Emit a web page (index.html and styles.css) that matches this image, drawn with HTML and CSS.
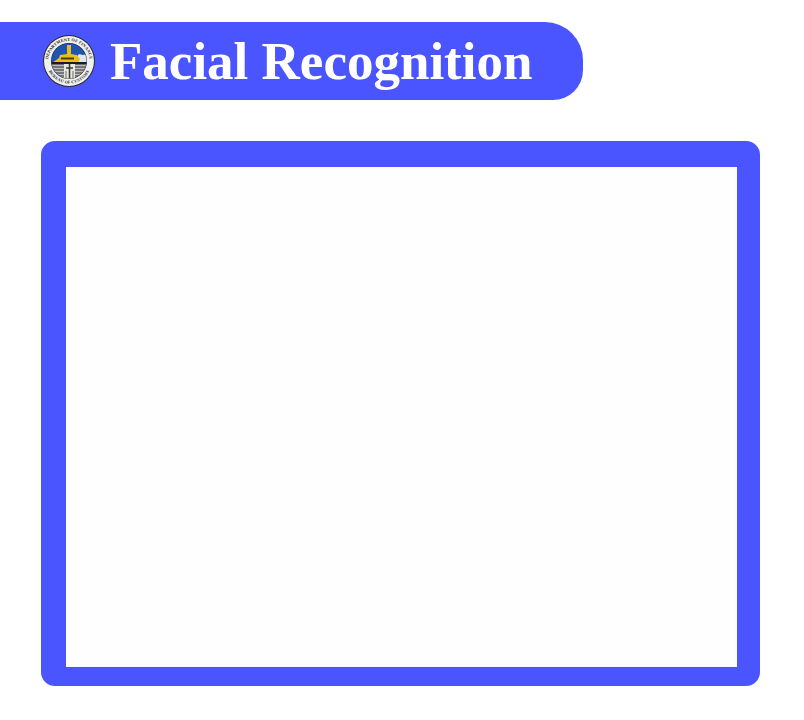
FILE: index.html
```html
<!DOCTYPE html>
<html lang="en">
<head>
<meta charset="utf-8">
<title>Facial Recognition</title>
<link rel="stylesheet" href="styles.css">
</head>
<body>
<header class="banner">
  <svg class="seal" viewBox="0 0 52 52" width="52" height="52" aria-hidden="true">
    <defs>
      <path id="arcTop" d="M5.4 31a21 21 0 1 1 41.2 0"/>
      <path id="arcBottom" d="M3.4 26a22.6 22.6 0 0 0 45.2 0"/>
      <clipPath id="inner"><circle cx="26" cy="26" r="17.5"/></clipPath>
    </defs>
    <circle cx="26" cy="26" r="26" fill="#2a2a34"/>
    <circle cx="26" cy="26" r="25" fill="#f0f0ee"/>
    <circle cx="26" cy="26" r="18" fill="#20233a"/>
    <g clip-path="url(#inner)">
      <rect x="6" y="6" width="40" height="23" fill="#1d55b0"/>
      <path d="M33 23l3-4 4 1 4-1 2 4v4H33z" fill="#dfe6ee"/>
      <path d="M9 28l7-5 1-3 7-1v-9h4v9l6 1 3 4-2 4H9z" fill="#f0bd18"/>
      <rect x="18" y="22.500" width="13" height="2" fill="#4a3d10"/>
      <rect x="6" y="27" width="40" height="2.500" fill="#1c1c22"/>
      <rect x="6" y="29.500" width="40" height="18" fill="#bdbdbd"/>
      <path d="M6 32h40M6 35h40M6 38h40M6 41h40M6 44h40" stroke="#33333a" stroke-width="1.200"/>
      <rect x="21" y="29" width="11" height="17" fill="#e8e8e2"/>
      <path d="M26.500 29v17M23 33h7" stroke="#3a3c32" stroke-width="1.600"/>
      <path d="M23 36v9M30 36v9" stroke="#6a6a60" stroke-width="1"/>
    </g>
    <text class="seal-text"><textPath href="#arcTop" startOffset="50%">DEPARTMENT OF FINANCE</textPath></text>
    <text class="seal-text"><textPath href="#arcBottom" startOffset="50%">BUREAU OF CUSTOMS</textPath></text>
  </svg>
  <h1 class="title">Facial Recognition</h1>
</header>
<main class="frame"></main>
</body>
</html>
```
FILE: styles.css
```css
html, body {
  margin: 0;
  padding: 0;
  background: #ffffff;
}
body {
  padding-top: 22px;
  height: 698px;
  overflow: hidden;
}
.banner {
  box-sizing: border-box;
  width: 583px;
  height: 78px;
  padding-left: 43px;
  display: flex;
  align-items: center;
  gap: 15px;
  background: #4a55ff;
  border-radius: 0 38px 30px 0;
}
.seal {
  flex: none;
}
.seal-text {
  font-family: "Liberation Serif", serif;
  font-size: 4.200px;
  font-weight: 700;
  fill: #1c1c24;
  text-anchor: middle;
  letter-spacing: 0.2px;
}
.title {
  margin: 0;
  font-family: "Liberation Serif", serif;
  font-size: 53px;
  font-weight: 700;
  line-height: 1;
  color: #ffffff;
  white-space: nowrap;
}
.frame {
  box-sizing: border-box;
  width: 719px;
  height: 545px;
  margin: 41px 0 0 41px;
  background: #fefefe;
  border-style: solid;
  border-color: #4a55ff;
  border-width: 26px 23px 19px 25px;
  border-radius: 14px;
}
```
